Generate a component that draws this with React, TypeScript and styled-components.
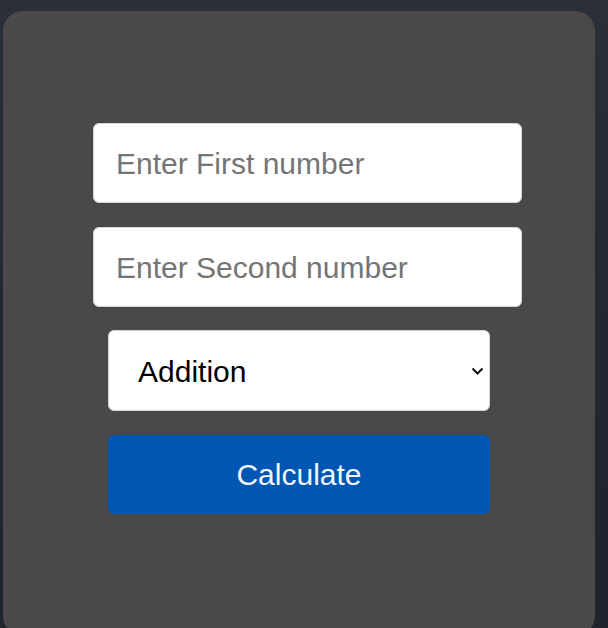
import React from "react";
import styled, { createGlobalStyle } from "styled-components";

const Global = createGlobalStyle`
  html, body { margin: 0; padding: 0; }
  body {
    background: linear-gradient(180deg, #2a2f38 0%, #23272f 50%, #1f232a 100%);
    min-height: 628px;
    font-family: "Liberation Sans", Arial, sans-serif;
    overflow: hidden;
  }
`;

const Page = styled.div`
  padding: 11px 13px 0 3px;
  height: 628px;
  box-sizing: border-box;
`;

const Card = styled.div`
  background: #4a4849;
  border-radius: 20px;
  height: 625px;
  padding-top: 112px;
  box-sizing: border-box;
  display: flex;
  flex-direction: column;
  align-items: center;
  gap: 24px;
`;

const Input = styled.input`
  width: 429px;
  height: 80px;
  margin-left: 17px;
  box-sizing: border-box;
  border: 1px solid #d4d4d4;
  border-radius: 6px;
  background: #fff;
  padding: 1px 22px 0;
  font-family: "Liberation Sans", Arial, sans-serif;
  font-size: 30px;
  color: #222;
  outline: none;
  &::placeholder { color: #757575; }
`;

const SelectWrap = styled.div`
  position: relative;
  width: 382px;
  height: 81px;
  margin-top: -1px;
  margin-bottom: 0;
`;

const Select = styled.select`
  appearance: none;
  width: 100%;
  height: 100%;
  box-sizing: border-box;
  border: 1px solid #d4d4d4;
  border-radius: 6px;
  background: #fff;
  padding: 1px 0 0 29px;
  font-family: "Liberation Sans", Arial, sans-serif;
  font-size: 30px;
  color: #000;
  outline: none;
`;

const Chevron = styled.svg`
  position: absolute;
  right: 6px;
  top: 37px;
  width: 13px;
  height: 8px;
  pointer-events: none;
`;

const Button = styled.button`
  width: 382px;
  height: 79px;
  border: none;
  border-radius: 6px;
  background: #0056b3;
  color: #f2f5fa;
  font-family: "Liberation Sans", Arial, sans-serif;
  font-size: 30px;
  padding: 0;
  cursor: pointer;
`;

export default function App() {
  return (
    <>
      <Global />
      <Page>
        <Card>
          <Input type="number" placeholder="Enter First number" />
          <Input type="number" placeholder="Enter Second number" />
          <SelectWrap>
            <Select defaultValue="add">
              <option value="add">Addition</option>
              <option value="sub">Subtraction</option>
              <option value="mul">Multiplication</option>
              <option value="div">Division</option>
            </Select>
            <Chevron viewBox="0 0 13 8">
              <path d="M1.5 1.5 L6.5 6.5 L11.5 1.5" fill="none" stroke="#111" strokeWidth="2" />
            </Chevron>
          </SelectWrap>
          <Button>Calculate</Button>
        </Card>
      </Page>
    </>
  );
}
